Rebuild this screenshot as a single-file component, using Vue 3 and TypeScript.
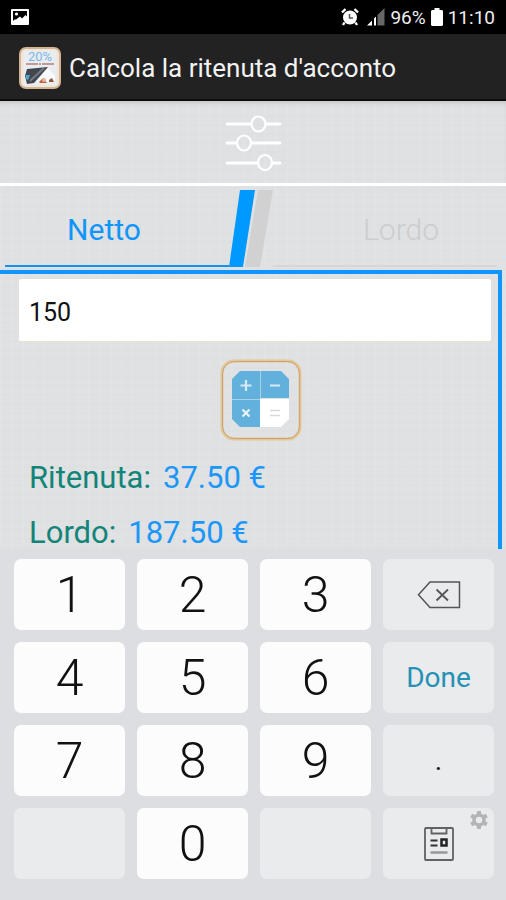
<script setup lang="ts">
import { computed, ref } from 'vue'

type Tab = 'Netto' | 'Lordo'

const tab = ref<Tab>('Netto')
const amount = ref('150')

const value = computed(() => Number.parseFloat(amount.value) || 0)
const gross = computed(() => (tab.value === 'Netto' ? value.value / 0.8 : value.value))
const withholding = computed(() => gross.value * 0.2)
const other = computed(() => (tab.value === 'Netto' ? gross.value : gross.value - withholding.value))
const otherLabel = computed(() => (tab.value === 'Netto' ? 'Lordo:' : 'Netto:'))

const euro = (n: number): string => `${n.toFixed(2)} €`

function press(key: string): void {
  amount.value += key
}

function erase(): void {
  amount.value = amount.value.slice(0, -1)
}
</script>

<template>
  <div class="screen">
    <div class="status">
      <svg class="picture" width="18" height="16" viewBox="0 0 18 16">
        <rect width="18" height="16" rx="1" fill="#fff" />
        <path d="M2 2H16V7.500L14.500 6L11 9.500L9 7.500L5 10.500H3.500L2 12Z" fill="#000" />
        <circle cx="5.500" cy="5" r="1.600" fill="#fff" />
      </svg>
      <div class="indicators">
        <svg width="18" height="18" viewBox="0 0 18 18">
          <circle cx="9" cy="9.500" r="7" fill="#fff" />
          <path d="M1 4.500L4.500 1M17 4.500L13.500 1M3.500 14.500L2 17M14.500 14.500L16 17" stroke="#fff" stroke-width="2.400" />
          <path d="M8.500 6V10H12" fill="none" stroke="#555" stroke-width="1.500" />
        </svg>
        <svg class="signal" width="18" height="18" viewBox="0 0 18 18">
          <path d="M0 17.500L5 12.500V17.500ZM7 10.500L9 8.500V17.500H7Z" fill="#fff" />
          <path d="M10.500 7L17.500 0V17.500H10.500Z" fill="#666" />
        </svg>
        <span>96%</span>
        <svg class="battery" width="12" height="18" viewBox="0 0 12 18">
          <path d="M3.500 0H8.500V2H11L12 3V17L11 18H1L0 17V3L1 2H3.500Z" fill="#fff" />
        </svg>
        <span>11:10</span>
      </div>
    </div>

    <header class="appbar">
      <svg width="42" height="42" viewBox="0 0 42 42">
        <rect x="1" y="1" width="40" height="40" rx="6" fill="#efe6de" stroke="#d3b490" stroke-width="2" />
        <rect x="5" y="4" width="32" height="34" fill="#e9edf0" />
        <text x="21" y="14" text-anchor="middle" font-size="13" class="logo-text" fill="#7ab7e8">20%</text>
        <path d="M7 17H35" stroke="#c39a98" stroke-width="2" stroke-dasharray="12 1 2 1" />
        <path d="M8 22L29 20L15 36L8 37L6 29Z" fill="#42464f" />
        <path d="M11 34L25 21" stroke="#747b86" stroke-width="2" />
        <path d="M7 28L11 28L9 33L7 32Z" fill="#4ba9d6" />
        <path d="M29 21L36 29V35H17Z" fill="#f8f9fa" />
        <path d="M20 35L24 31L28 36H21Z" fill="#bd613c" />
        <circle cx="25" cy="33" r="2" fill="#e8b49a" />
        <path d="M30 33L33 31L35 35H30Z" fill="#8b5a3c" />
      </svg>
      <h1>Calcola la ritenuta d'acconto</h1>
    </header>

    <main class="content">
      <div class="toolbar">
        <button class="plain" type="button" aria-label="Impostazioni">
          <svg width="58" height="58" viewBox="0 0 58 58" fill="none" stroke="#fff" stroke-width="2.800" stroke-linecap="round">
            <path d="M3 11H27M42 11H56M3 30H12M27 30H56M3 50H34M48 50H56" />
            <ellipse cx="34.500" cy="11" rx="7" ry="7.500" stroke-width="2.200" />
            <ellipse cx="20" cy="30" rx="7" ry="7.500" stroke-width="2.200" />
            <ellipse cx="41" cy="49.500" rx="7" ry="7.500" stroke-width="2.200" />
          </svg>
        </button>
      </div>

      <div class="tabs">
        <button class="tab left" :class="{ active: tab === 'Netto' }" type="button" @click="tab = 'Netto'">Netto</button>
        <svg class="slash" width="44" height="77" viewBox="0 0 44 77">
          <path d="M29 0H44L31 77H16Z" fill="#d1d1d1" />
          <path d="M11 0H26L14 77H0Z" fill="#0099ff" />
        </svg>
        <button class="tab right" :class="{ active: tab === 'Lordo' }" type="button" @click="tab = 'Lordo'">Lordo</button>
      </div>

      <section class="panel">
        <input v-model="amount" class="amount" type="text" inputmode="decimal" aria-label="Importo" />
        <button class="plain calc" type="button" aria-label="Calcola">
          <svg width="82" height="82" viewBox="0 0 82 82">
            <rect x="2" y="2" width="78" height="78" rx="12" fill="none" stroke="#e6c597" stroke-width="3" />
            <rect x="2.500" y="2.500" width="77" height="77" rx="12" fill="none" stroke="#c9a474" stroke-width="1" />
            <path d="M20 12H40V40H12V20Z" fill="#62b1dc" />
            <path d="M41 12H61L69 20V39H41Z" fill="#62b1dc" />
            <path d="M12 41H40V68H20L12 60Z" fill="#62b1dc" />
            <path d="M40 40H69V60L61 68H40Z" fill="#fff" />
            <path d="M40.500 12V40M12 40.500H40" stroke="#a5d2e9" />
            <path d="M26 21V32M20.500 26.500H31.500M50 26.500H60" stroke="#d4eaf5" stroke-width="2.200" />
            <path d="M22.500 50.500L29.500 57.500M29.500 50.500L22.500 57.500" stroke="#e7f3fa" stroke-width="2.200" />
            <path d="M50 51.500H60M50 56.500H60" stroke="#d8d8d8" stroke-width="1.500" />
          </svg>
        </button>
        <dl class="results">
          <div>
            <dt>Ritenuta:</dt>
            <dd>{{ euro(withholding) }}</dd>
          </div>
          <div>
            <dt>{{ otherLabel }}</dt>
            <dd>{{ euro(other) }}</dd>
          </div>
        </dl>
      </section>
    </main>

    <div class="keyboard">
      <button v-for="k in ['1', '2', '3']" :key="k" class="key digit" type="button" @click="press(k)">{{ k }}</button>
      <button class="key" type="button" aria-label="Cancella" @click="erase">
        <svg width="44" height="28" viewBox="0 0 44 28" fill="none" stroke="#555" stroke-width="1.500">
          <path d="M13 1H42.500V26.500H13L1.500 13.800Z" />
          <path d="M19.500 8.500L31 19.500M31 8.500L19.500 19.500" stroke-width="1.800" />
        </svg>
      </button>

      <button v-for="k in ['4', '5', '6']" :key="k" class="key digit" type="button" @click="press(k)">{{ k }}</button>
      <button class="key done" type="button">Done</button>

      <button v-for="k in ['7', '8', '9']" :key="k" class="key digit" type="button" @click="press(k)">{{ k }}</button>
      <button class="key dot" type="button" @click="press('.')">.</button>

      <button class="key" type="button" disabled></button>
      <button class="key digit" type="button" @click="press('0')">0</button>
      <button class="key" type="button" disabled></button>
      <button class="key" type="button" aria-label="Appunti">
        <svg width="30" height="34" viewBox="0 0 30 34" fill="none" stroke="#606264" stroke-width="1.800">
          <rect x="1" y="1" width="28" height="32" rx="1" />
          <path d="M7.500 1V6.500H22.500V1" />
          <path d="M6.500 13.500H13.500M6.500 18.500H13.500" stroke="#333" />
          <rect x="17.500" y="12.500" width="5" height="6" stroke="#222" stroke-width="2.500" />
          <path d="M6.500 25.500H23.500" stroke="#999" stroke-width="2.500" />
        </svg>
        <svg class="gear" width="18" height="18" viewBox="0 0 18 18" fill="none" stroke="#b2b4b6">
          <circle cx="9" cy="9" r="5" stroke-width="3.500" />
          <path d="M9 0V4M9 14V18M1.200 4.500L4.700 6.500M13.300 11.500L16.800 13.500M1.200 13.500L4.700 11.500M13.300 6.500L16.800 4.500" stroke-width="4" />
        </svg>
      </button>
    </div>
  </div>
</template>

<style>
body {
  margin: 0;
}
</style>

<style scoped>
.screen {
  display: flex;
  flex-direction: column;
  min-height: 100vh;
  background: #dcdee1;
  font-family: Roboto, "Liberation Sans", sans-serif;
}

button {
  margin: 0;
  border: 0;
  font-family: inherit;
}

.status {
  display: flex;
  align-items: center;
  justify-content: space-between;
  box-sizing: border-box;
  height: 34px;
  padding: 0 11px;
  background: #000;
  color: #eee;
  font-size: 19px;
}

.indicators {
  display: flex;
  align-items: center;
  gap: 5px;
}

.signal {
  margin-left: 3px;
}

.appbar {
  display: flex;
  align-items: center;
  gap: 8px;
  box-sizing: border-box;
  height: 67px;
  padding: 3px 19px 0;
  border-bottom: 2px solid #0c0c0c;
  background: #222;
}

h1 {
  margin: 0;
  color: #f2f2f2;
  font-size: 26px;
  font-weight: 400;
  line-height: 32px;
}

.logo-text {
  font-family: Roboto, sans-serif;
}

.content {
  display: flex;
  flex: 1;
  flex-direction: column;
  background:
    repeating-linear-gradient(90deg, rgba(255, 255, 255, 0.05) 0 2px, transparent 2px 11px),
    repeating-linear-gradient(0deg, rgba(120, 125, 130, 0.015) 0 2px, transparent 2px 9px),
    #dfe1e3;
}

.toolbar {
  display: flex;
  align-items: center;
  justify-content: center;
  height: 82px;
  border-bottom: 3px solid #fff;
  box-shadow: inset 0 4px 4px -2px rgba(0, 0, 0, 0.12);
}

.plain {
  display: flex;
  padding: 0;
  background: none;
}

.tabs {
  display: grid;
  grid-template-columns: 1fr 44px 1fr;
  padding: 4px 9px 3px 5px;
}

.tab {
  box-sizing: border-box;
  padding: 4px 0 0;
  border-bottom: 2px solid #d6d6d7;
  background: none;
  color: #cbcdce;
  font-size: 30px;
  font-weight: 300;
  line-height: 36px;
}

.tab.active {
  border-bottom-color: #0f93ee;
  color: #1095fa;
  font-weight: 400;
}

.left {
  padding-right: 26px;
}

.right {
  padding-left: 32px;
}

.panel {
  display: flex;
  flex: 1;
  flex-direction: column;
  align-items: center;
  margin-right: 4px;
  padding: 5px 7px 0 19px;
  border-top: 4px solid #1095fa;
  border-right: 4px solid #1095fa;
}

.amount {
  box-sizing: border-box;
  width: 100%;
  height: 63px;
  padding: 4px 10px 0;
  border: 0;
  border-bottom: 1px solid #e6e4d0;
  outline: 0;
  border-radius: 2px;
  background: #fff;
  color: #111;
  font-family: inherit;
  font-size: 25px;
}

.calc {
  margin: 17px 0 17px 12px;
}

.results {
  align-self: stretch;
  margin: 0;
  padding-left: 10px;
  font-size: 31px;
}

.results div {
  display: flex;
  gap: 12px;
  height: 55px;
  line-height: 40px;
}

.results div:last-child {
  height: 36px;
}

dt {
  color: #138478;
}

dd {
  margin: 0;
  color: #1b97f7;
}

.keyboard {
  display: grid;
  grid-template-columns: repeat(4, 1fr);
  grid-auto-rows: 71px;
  gap: 12px;
  padding: 10px 12px 21px 14px;
  background: #dcdee1;
}

.key {
  position: relative;
  display: flex;
  align-items: center;
  justify-content: center;
  padding: 0;
  border-radius: 7px;
  background: #e9ebed;
  color: #111;
}

.digit {
  background: #fcfcfc;
  font-size: 50px;
  font-weight: 300;
}

.done {
  color: #2591b5;
  font-size: 28px;
}

.dot {
  font-size: 28px;
}

.gear {
  position: absolute;
  top: 3px;
  right: 6px;
}
</style>
